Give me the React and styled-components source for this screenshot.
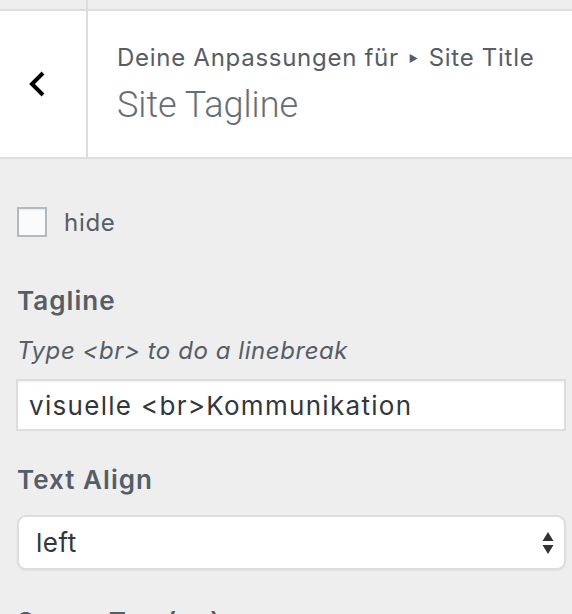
import React from 'react';
import styled, { createGlobalStyle } from 'styled-components';

const GlobalStyle = createGlobalStyle`
    html, body {
        margin: 0;
        padding: 0;
        background: #eeeeee;
        font-family: Inter, "Open Sans", "Liberation Sans", sans-serif;
        overflow: hidden;
    }
`;

const Panel = styled.div`
    width: 572px;
    height: 614px;
    background: #eeeeee;
    overflow: hidden;
    letter-spacing: 0.035em;
`;

const TopStrip = styled.div`
    display: flex;
    height: 9px;
    border-bottom: 2px solid #dddddd;
`;

const StripCell = styled.div`
    width: ${(p) => p.$width || 'auto'};
    flex: ${(p) => (p.$width ? 'none' : '1')};
    border-right: ${(p) => (p.$divider ? '2px solid #dddddd' : 'none')};
`;

const Header = styled.div`
    display: flex;
    height: 146px;
    background: #ffffff;
    border-bottom: 2px solid #dddddd;
`;

const BackButton = styled.button`
    width: 88px;
    flex: none;
    border: none;
    border-right: 2px solid #dddddd;
    background: #ffffff;
    display: flex;
    align-items: center;
    justify-content: center;
    padding: 0 12px 0 0;
    cursor: pointer;
    color: #000000;
`;

const TitleBlock = styled.div`
    display: flex;
    flex-direction: column;
    padding: 32px 0 0 29px;
`;

const Breadcrumb = styled.div`
    font-size: 24px;
    line-height: 30px;
    color: #555d66;
    display: flex;
    align-items: center;
    gap: 10px;
    letter-spacing: 0.03em;
`;

const Caret = styled.span`
    font-size: 10px;
    color: #555d66;
`;

const Title = styled.h1`
    margin: 12px 0 0;
    font-family: Roboto, Inter, sans-serif;
    font-size: 36px;
    line-height: 40px;
    font-weight: 300;
    color: #666d75;
    letter-spacing: 0;
`;

const Body = styled.div`
    padding: 48px 6px 0 16px;
`;

const CheckRow = styled.label`
    display: flex;
    align-items: center;
    gap: 17px;
    height: 30px;
    margin-left: 1px;
    font-size: 24px;
    color: #555d66;
    letter-spacing: 0.03em;
`;

const Box = styled.span`
    width: 30px;
    height: 30px;
    box-sizing: border-box;
    border: 2px solid #b4b9be;
    background: #fbfbfb;
    box-shadow: inset 0 1px 2px rgba(0, 0, 0, 0.07);
`;

const Field = styled.div`
    margin-top: ${(p) => p.$top || 0}px;
`;

const Label = styled.div`
    font-size: 26px;
    font-weight: 600;
    line-height: 30px;
    color: #555d66;
    padding-left: 1px;
    letter-spacing: 0.04em;
`;

const Description = styled.div`
    margin-top: 21px;
    font-size: 24px;
    font-style: italic;
    line-height: 28px;
    color: #555d66;
    padding-left: 1px;
`;

const TextInput = styled.div`
    margin-top: 14px;
    height: 52px;
    box-sizing: border-box;
    background: #ffffff;
    border: 2px solid #dddddd;
    box-shadow: inset 0 1px 2px rgba(0, 0, 0, 0.07);
    padding: 0 11px;
    display: flex;
    align-items: center;
    font-size: 26px;
    letter-spacing: 0.05em;
    color: #32373c;
`;

const Select = styled.div`
    margin-top: 20px;
    margin-left: 1px;
    height: 55px;
    box-sizing: border-box;
    background: #ffffff;
    border: 2px solid #dddddd;
    border-radius: 9px;
    box-shadow: 0 1px 2px rgba(0, 0, 0, 0.06);
    padding: 0 10px 0 17px;
    display: flex;
    align-items: center;
    justify-content: space-between;
    font-size: 26px;
    color: #32373c;
`;

const Arrows = () => (
    <svg width="12" height="24" viewBox="0 0 12 24">
        <path d="M6 1 L11.5 10 L0.5 10 Z" fill="#333" />
        <path d="M6 23 L11.5 14 L0.5 14 Z" fill="#333" />
    </svg>
);

const Chevron = () => (
    <svg width="20" height="28" viewBox="0 0 20 28">
        <path d="M16 3 L5 14 L16 25" fill="none" stroke="#000" strokeWidth="4" />
    </svg>
);

const App = () => {
    return (
        <Panel>
            <GlobalStyle />
            <TopStrip>
                <StripCell $width="86px" $divider />
                <StripCell />
            </TopStrip>
            <Header>
                <BackButton aria-label="Zurück">
                    <Chevron />
                </BackButton>
                <TitleBlock>
                    <Breadcrumb>
                        <span>Deine Anpassungen für</span>
                        <Caret>▶</Caret>
                        <span>Site Title</span>
                    </Breadcrumb>
                    <Title>Site Tagline</Title>
                </TitleBlock>
            </Header>
            <Body>
                <CheckRow>
                    <Box />
                    hide
                </CheckRow>
                <Field $top={49}>
                    <Label>Tagline</Label>
                    <Description>Type &lt;br&gt; to do a linebreak</Description>
                    <TextInput>visuelle &lt;br&gt;Kommunikation</TextInput>
                </Field>
                <Field $top={34}>
                    <Label>Text Align</Label>
                    <Select>
                        <span>left</span>
                        <Arrows />
                    </Select>
                </Field>
                <Field $top={37}>
                    <Label>Space Top (px)</Label>
                </Field>
            </Body>
        </Panel>
    );
};

export default App;
